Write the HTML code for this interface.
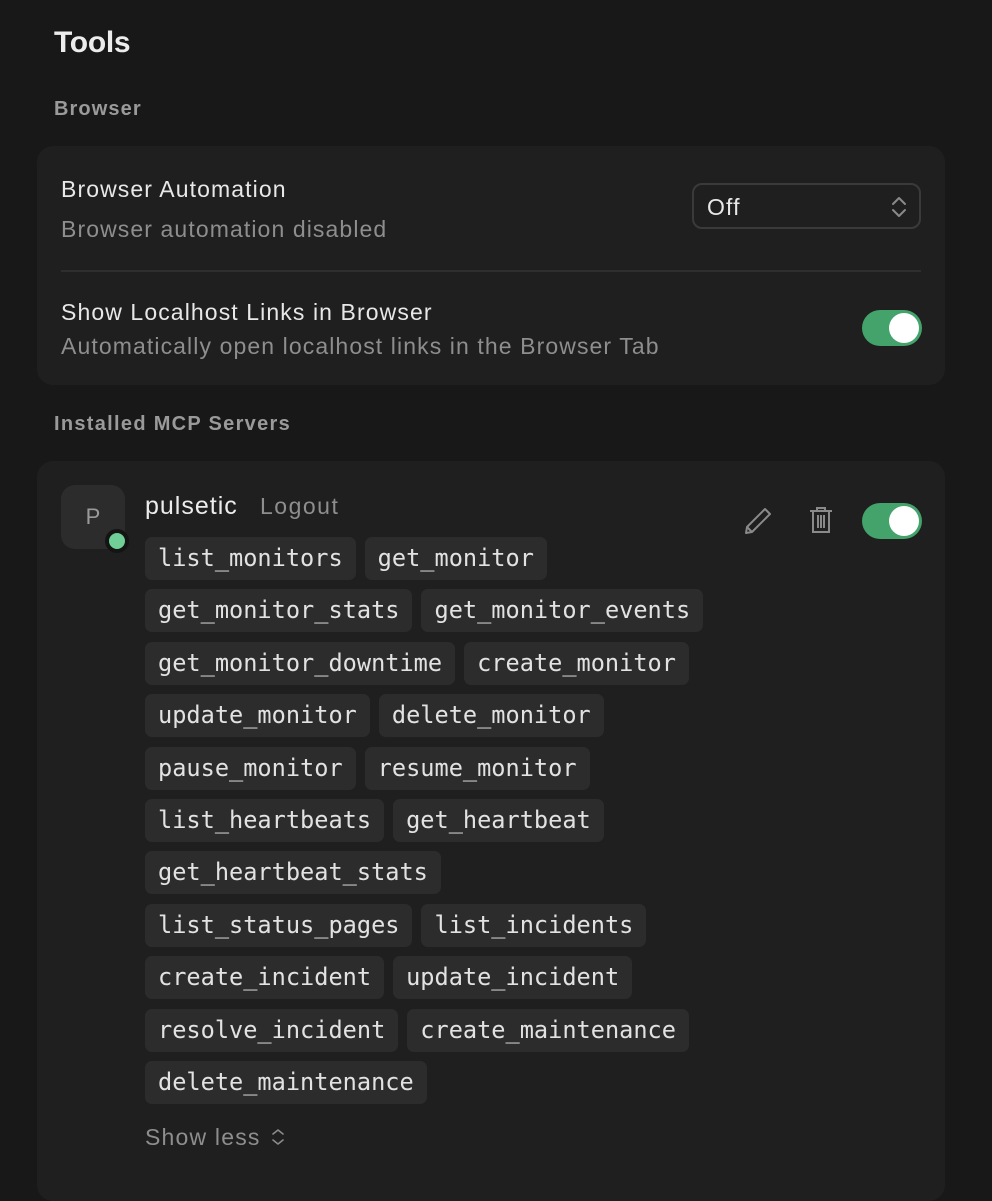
<!DOCTYPE html>
<html><head><meta charset="utf-8"><style>
*{box-sizing:border-box;margin:0;padding:0}
body{width:992px;height:1174px;background:#181818;font-family:"Liberation Sans",sans-serif;color:#e6e6e6;position:relative;overflow:hidden}
.abs{position:absolute}
.h1{left:54px;top:26px;font-size:30px;font-weight:bold;color:#ececec;letter-spacing:-0.3px}
.lbl{left:54px;font-size:20px;color:#9a9a9a;font-weight:bold;letter-spacing:1.1px}
.card{position:absolute;left:37px;width:908px;background:#1f1f1f;border-radius:16px}
.t{font-size:23px;color:#e8e8e8;letter-spacing:1.1px}
.s{font-size:23px;color:#8e8e8e;letter-spacing:1.1px}
.tog{position:absolute;width:60px;height:36px;border-radius:18px;background:#43a36a}
.tog::after{content:"";position:absolute;right:3px;top:3px;width:30px;height:30px;border-radius:50%;background:#fff}
.row{position:absolute;left:145px;display:flex;gap:9px}
.chip{height:43px;line-height:43px;padding:0 13px;background:#2c2c2c;border-radius:7px;font-family:"DejaVu Sans Mono","Liberation Mono",monospace;font-size:23.6px;color:#e2e2e2}
</style></head><body>
<div class="abs h1">Tools</div>
<div class="abs lbl" style="top:98px">Browser</div>
<div class="card" style="top:146px;height:239px">
  <div class="abs t" style="left:24px;top:30px">Browser Automation</div>
  <div class="abs s" style="left:24px;top:70px">Browser automation disabled</div>
  <div class="abs" style="left:655px;top:37px;width:229px;height:46px;border:2px solid #3a3a3a;border-radius:10px">
    <div class="abs t" style="left:13px;top:9px">Off</div>
    <svg class="abs" style="left:196px;top:10px" width="18" height="24" viewBox="0 0 18 24"><path d="M3 9 L9 3 L15 9 M3 15 L9 21 L15 15" fill="none" stroke="#8a8a8a" stroke-width="2" stroke-linecap="round" stroke-linejoin="round"/></svg>
  </div>
  <div class="abs" style="left:24px;top:124px;width:860px;height:2px;background:#2e2e2e"></div>
  <div class="abs t" style="left:24px;top:153px">Show Localhost Links in Browser</div>
  <div class="abs s" style="left:24px;top:187px">Automatically open localhost links in the Browser Tab</div>
  <div class="tog" style="left:825px;top:164px"></div>
</div>
<div class="abs lbl" style="top:413px;letter-spacing:1.3px">Installed MCP Servers</div>
<div class="card" style="top:461px;height:740px"></div>
<div class="abs" style="left:61px;top:485px;width:64px;height:64px;border-radius:14px;background:#2c2c2c;color:#9a9a9a;font-size:22px;text-align:center;line-height:64px">P</div>
<div class="abs" style="left:105px;top:529px;width:24px;height:24px;border-radius:50%;background:#6fcf97;border:4px solid #141414"></div>
<div class="abs" style="left:145px;top:492px;font-size:25px;color:#ececec;letter-spacing:1px">pulsetic</div>
<div class="abs" style="left:260px;top:493px;font-size:23px;color:#8e8e8e;letter-spacing:1.5px">Logout</div>
<svg class="abs" style="left:742px;top:505px" width="32" height="32" viewBox="0 0 32 32"><path d="M4 28 L5 22 L23 4 L28 9 L10 27 Z M5 22 L10 27" fill="none" stroke="#8a8a8a" stroke-width="2" stroke-linejoin="round"/></svg>
<svg class="abs" style="left:808px;top:506px" width="26" height="28" viewBox="0 0 26 28"><path d="M2 5 H24 M9 5 V2 H17 V5 M5 5 V26 H21 V5 M10 9 V22 M13 9 V22 M16 9 V22" fill="none" stroke="#8a8a8a" stroke-width="2"/></svg>
<div class="tog" style="left:862px;top:503px"></div>
<div class="row" style="top:537px"><span class="chip">list_monitors</span><span class="chip">get_monitor</span></div>
<div class="row" style="top:589.4px"><span class="chip">get_monitor_stats</span><span class="chip">get_monitor_events</span></div>
<div class="row" style="top:641.8px"><span class="chip">get_monitor_downtime</span><span class="chip">create_monitor</span></div>
<div class="row" style="top:694.2px"><span class="chip">update_monitor</span><span class="chip">delete_monitor</span></div>
<div class="row" style="top:746.6px"><span class="chip">pause_monitor</span><span class="chip">resume_monitor</span></div>
<div class="row" style="top:799px"><span class="chip">list_heartbeats</span><span class="chip">get_heartbeat</span></div>
<div class="row" style="top:851.4px"><span class="chip">get_heartbeat_stats</span></div>
<div class="row" style="top:903.8px"><span class="chip">list_status_pages</span><span class="chip">list_incidents</span></div>
<div class="row" style="top:956.2px"><span class="chip">create_incident</span><span class="chip">update_incident</span></div>
<div class="row" style="top:1008.6px"><span class="chip">resolve_incident</span><span class="chip">create_maintenance</span></div>
<div class="row" style="top:1061px"><span class="chip">delete_maintenance</span></div>
<div class="abs" style="left:145px;top:1124px;font-size:23px;color:#8e8e8e;letter-spacing:1.2px">Show less</div>
<svg class="abs" style="left:270px;top:1127px" width="16" height="20" viewBox="0 0 16 20"><path d="M3 7 L8 3 L13 7 M3 13 L8 17 L13 13" fill="none" stroke="#8a8a8a" stroke-width="1.6" stroke-linecap="round" stroke-linejoin="round"/></svg>
</body></html>
